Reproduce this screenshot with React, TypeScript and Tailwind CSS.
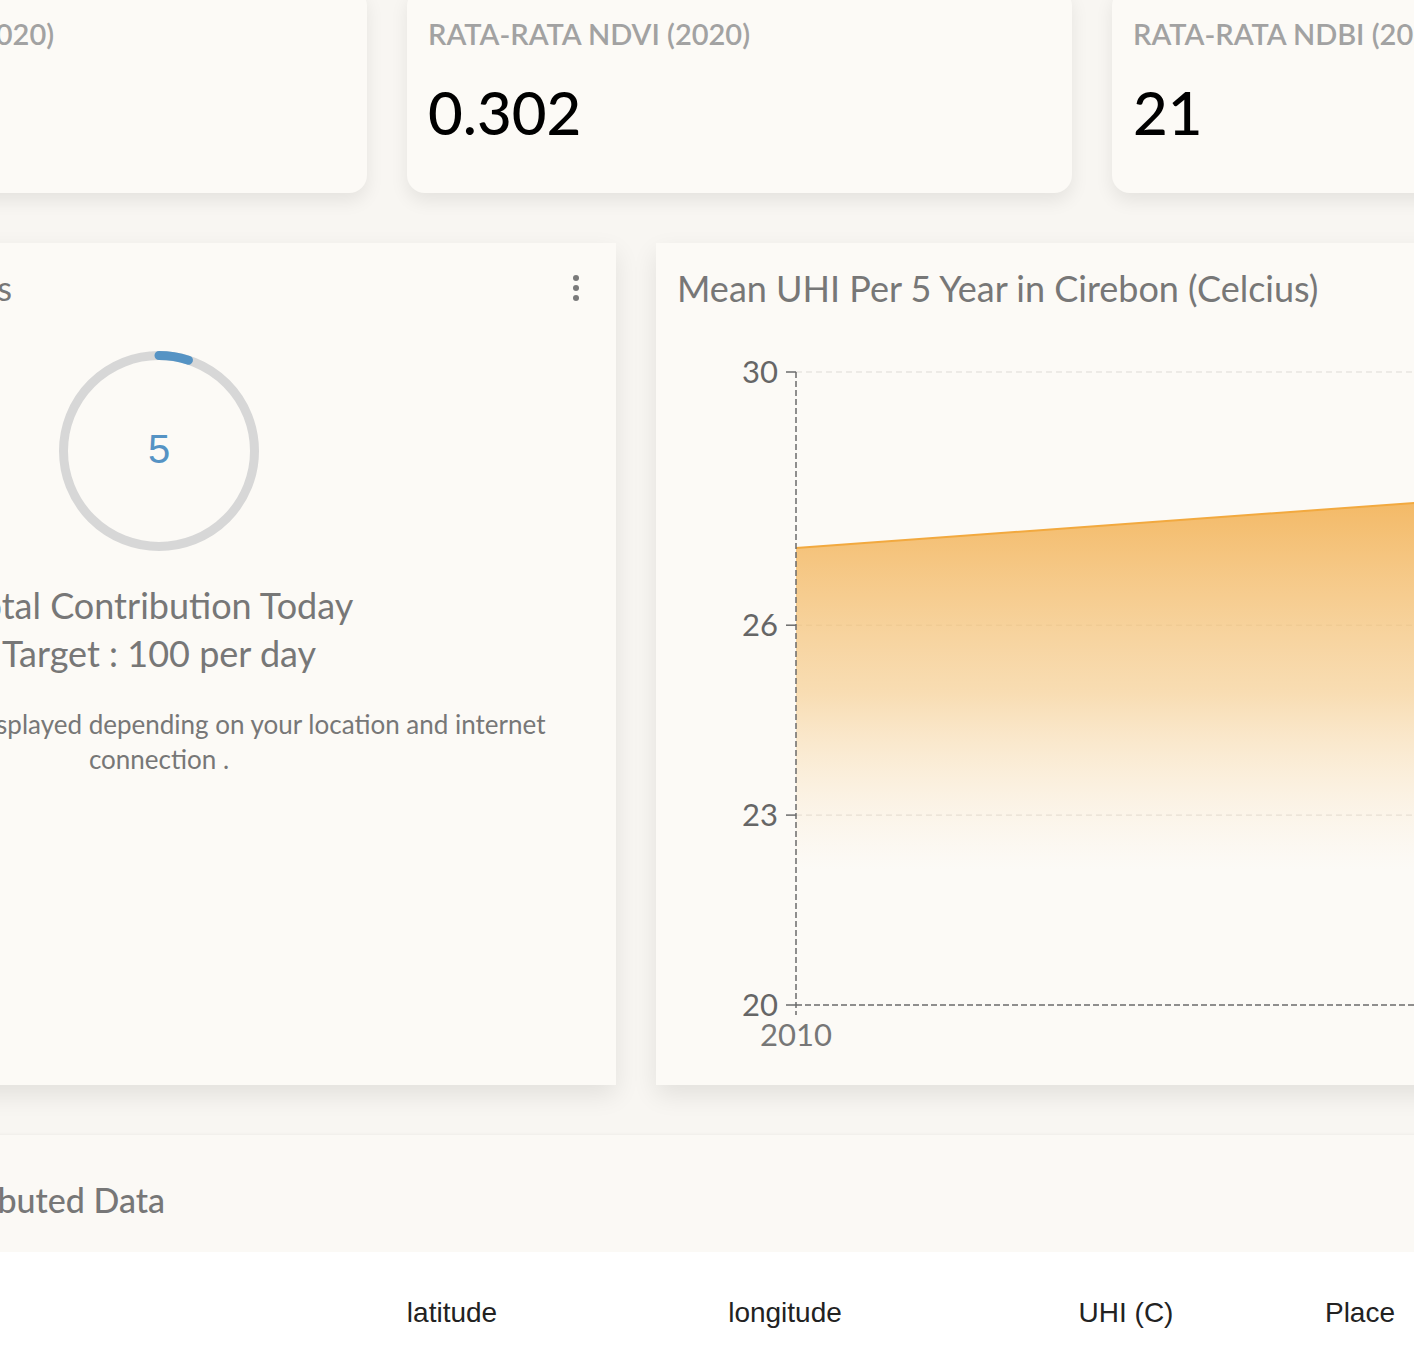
import React from "react";

const stats = [
  { title: "RATA-RATA SUHU (2020)", value: "27.8" },
  { title: "RATA-RATA NDVI (2020)", value: "0.302" },
  { title: "RATA-RATA NDBI (2020)", value: "21" },
];

const columns = [
  { label: "No", w: "w-[140px]" },
  { label: "Date", w: "w-[150px]" },
  { label: "", w: "w-[300px]" },
  { label: "latitude", w: "w-[320px]" },
  { label: "longitude", w: "w-[346px]" },
  { label: "UHI (C)", w: "w-[336px]" },
  { label: "Place", w: "w-[132px]" },
  { label: "Action", w: "w-[351px]" },
];

const font = { fontFamily: "Lato, 'Noto Sans', sans-serif" };

const ProgressRing = ({ value, target }: { value: number; target: number }) => {
  const r = 95.5;
  const c = 2 * Math.PI * r;
  const done = (value / target) * c;
  return (
    <div className="relative w-[210px] h-[210px]">
      <svg width="210" height="210" viewBox="0 0 210 210">
        <circle cx="105" cy="105" r={r} fill="none" stroke="#d7d7d7" strokeWidth="9" />
        <circle
          cx="105"
          cy="105"
          r={r}
          fill="none"
          stroke="#5593c4"
          strokeWidth="9"
          strokeLinecap="round"
          strokeDasharray={`${done} ${c}`}
          transform="rotate(-90 105 105)"
        />
      </svg>
      <div
        className="absolute inset-0 flex items-center justify-center pb-[4px] text-[40px] text-[#5593c4]"
        style={{ fontFamily: "'Liberation Sans', Arial, sans-serif" }}
      >
        {value}
      </div>
    </div>
  );
};

const UhiChart = () => {
  // y scale: 30 -> 42, 20 -> 675
  const y = (v: number) => 42 + (30 - v) * 63.3;
  const x0 = 140;
  const x1 = 1100;
  const p0 = 218;
  const p1 = 148;
  return (
    <svg width="1121" height="740" className="block">
      <defs>
        <linearGradient id="uhiFill" gradientUnits="userSpaceOnUse" x1="0" y1="148" x2="0" y2="540">
          <stop offset="0" stopColor="#f2ae4e" stopOpacity="0.92" />
          <stop offset="0.55" stopColor="#f5c57c" stopOpacity="0.55" />
          <stop offset="1" stopColor="#fbe3bf" stopOpacity="0" />
        </linearGradient>
      </defs>
      {[30, 26, 23].map((v) => (
        <line key={v} x1={x0} x2={x1} y1={y(v)} y2={y(v)} stroke="#dedbd6" strokeDasharray="6 4" />
      ))}
      <path d={`M${x0} ${p0} L${x1} ${p1} L${x1} ${y(20)} L${x0} ${y(20)} Z`} fill="url(#uhiFill)" />
      <line x1={x0} y1={p0} x2={x1} y2={p1} stroke="#f2a93f" strokeWidth="2" />
      <line x1={x0} x2={x1} y1={y(20)} y2={y(20)} stroke="#6b6b6b" strokeWidth="1.5" strokeDasharray="6 3" />
      <line x1={x0} x2={x0} y1={y(30)} y2={y(20) + 10} stroke="#6b6b6b" strokeWidth="1.5" strokeDasharray="6 3" />
      {[30, 26, 23, 20].map((v) => (
        <g key={v}>
          <line x1={x0 - 10} x2={x0} y1={y(v)} y2={y(v)} stroke="#6b6b6b" strokeWidth="1.5" />
          <text x={x0 - 18} y={y(v) + 11} textAnchor="end" fontSize="31" fill="#666" style={font}>
            {v}
          </text>
        </g>
      ))}
      <text x={x0} y={716} textAnchor="middle" fontSize="31" fill="#777" style={font}>
        2010
      </text>
      <text x={x1} y={716} textAnchor="middle" fontSize="31" fill="#777" style={font}>
        2015
      </text>
    </svg>
  );
};

export default function App() {
  return (
    <div className="w-full h-[1356px] overflow-hidden bg-[#f8f6f2]" style={font}>
      <div className="w-[2075px] ml-[-298px] mt-[-12px]">
        {/* stat cards */}
        <div className="grid grid-cols-[665px_665px_665px] gap-[40px]">
          {stats.map((s) => (
            <div
              key={s.title}
              className="h-[205px] rounded-[18px] bg-[#fcfaf6] shadow-[0_8px_18px_rgba(0,0,0,0.08)] px-[21px] pt-[26px]"
            >
              <div className="text-[29px] leading-[40px] font-semibold text-[#a2a2a2]">{s.title}</div>
              <div className="mt-[23px] text-[60px] leading-[70px] font-medium text-black">{s.value}</div>
            </div>
          ))}
        </div>

        {/* contribution + chart */}
        <div className="mt-[50px] grid grid-cols-[914px_1121px] gap-[40px]">
          <div className="h-[842px] bg-[#fcfaf6] shadow-[0_10px_24px_rgba(0,0,0,0.09)] flex flex-col">
            <div className="flex items-center justify-between pl-[21px] pr-[34px] pt-[25px]">
              <div className="text-[34px] leading-[40px] text-[#777]">Daily Contributions</div>
              <svg width="12" height="30" viewBox="0 0 12 30">
                <circle cx="6" cy="5" r="3" fill="#7a7a7a" />
                <circle cx="6" cy="15" r="3" fill="#7a7a7a" />
                <circle cx="6" cy="25" r="3" fill="#7a7a7a" />
              </svg>
            </div>
            <div className="flex flex-col items-center mt-[38px]">
              <ProgressRing value={5} target={100} />
              <div className="mt-[25px] text-[36px] leading-[48px] text-[#777]">Total Contribution Today</div>
              <div className="text-[36px] leading-[48px] text-[#777]">Target : 100 per day</div>
              <p className="mt-[30px] w-[820px] text-center text-[26px] leading-[35px] text-[#777]">
                Your data may be displayed depending on your location and internet connection .
              </p>
            </div>
          </div>

          <div className="h-[842px] bg-[#fcfaf6] shadow-[0_10px_24px_rgba(0,0,0,0.09)]">
            <div className="px-[21px] pt-[25px] text-[36px] leading-[40px] text-[#777]">
              Mean UHI Per 5 Year in Cirebon (Celcius)
            </div>
            <div className="mt-[22px]">
              <UhiChart />
            </div>
          </div>
        </div>

        {/* contributed data table */}
        <div className="mt-[50px] shadow-[0_-1px_3px_rgba(0,0,0,0.04)]">
          <div className="h-[117px] bg-[#fbf9f5] flex items-center pl-[202px] pt-[12px]">
            <div className="text-[34px] text-[#777] font-medium">Contributed Data</div>
          </div>
          <div className="bg-white h-[200px]">
            <div
              className="flex pt-[40px] text-[28px] text-[#222]"
              style={{ fontFamily: "'Liberation Sans', Arial, sans-serif" }}
            >
              {columns.map((c, i) => (
                <div key={i} className={`${c.w} text-center`}>
                  {c.label}
                </div>
              ))}
            </div>
          </div>
        </div>
      </div>
    </div>
  );
}
